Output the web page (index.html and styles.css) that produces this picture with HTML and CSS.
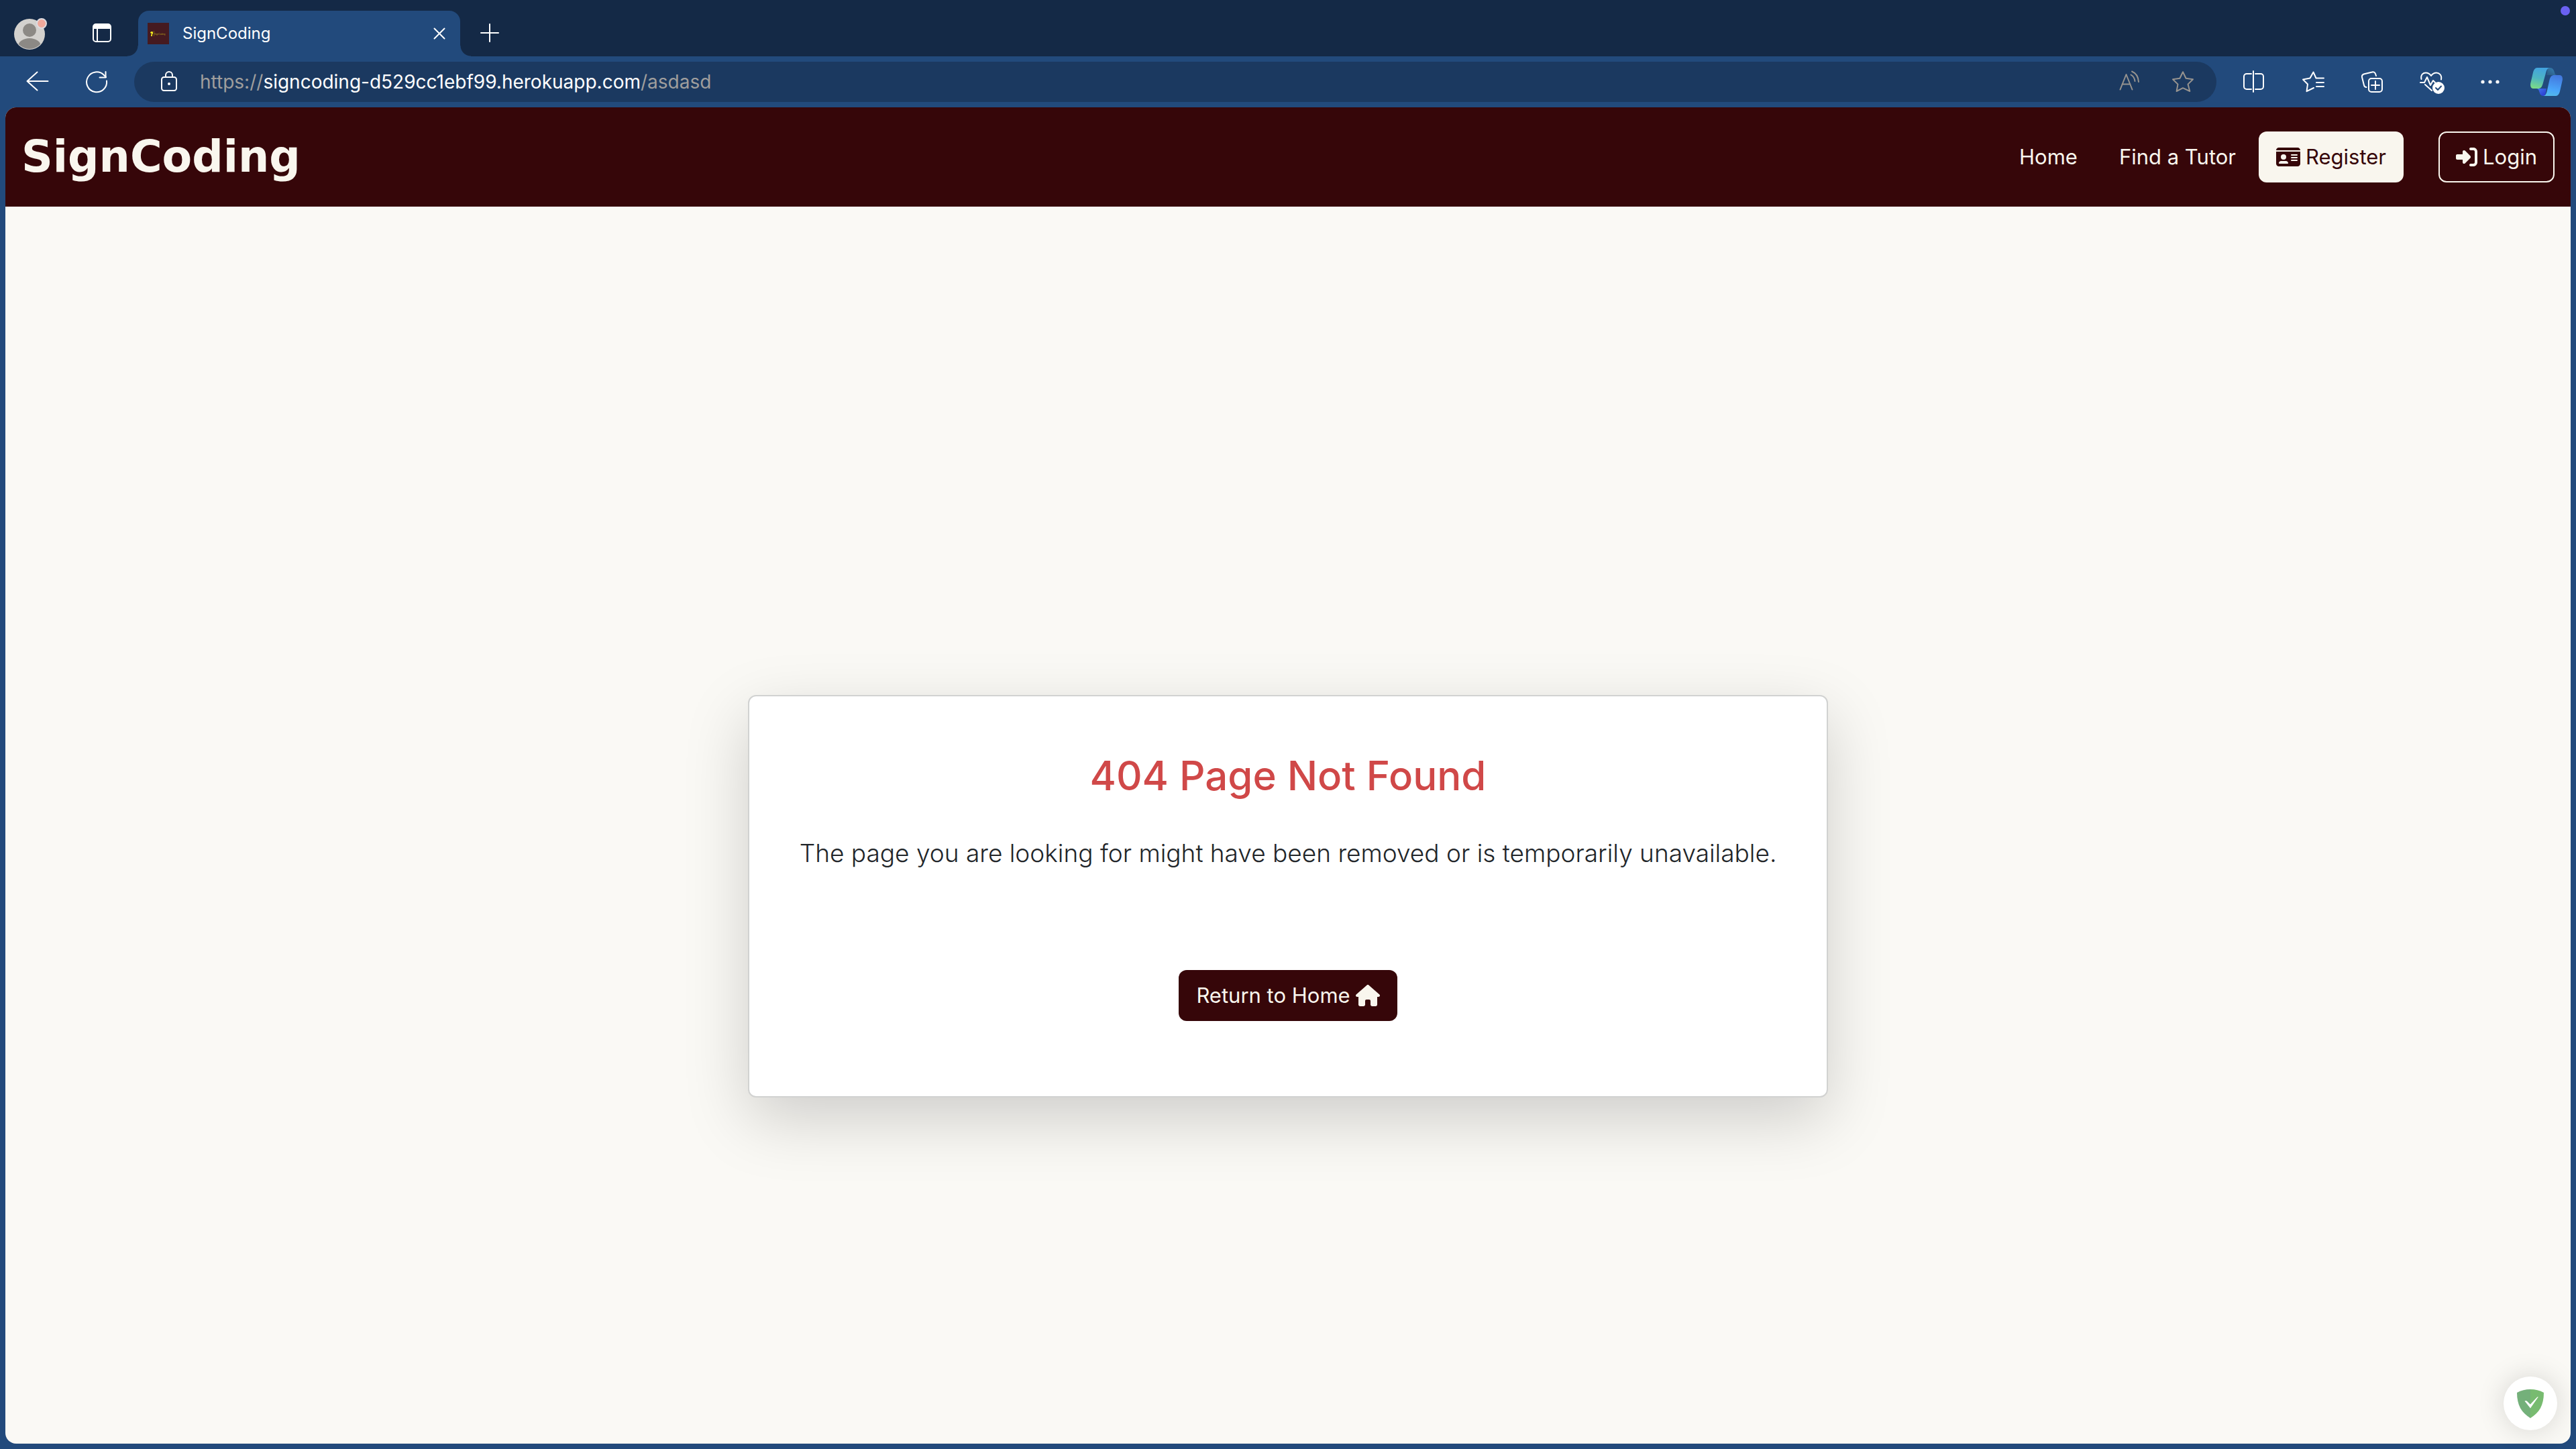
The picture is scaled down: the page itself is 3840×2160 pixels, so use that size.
FILE: index.html
```html
<!DOCTYPE html>
<html lang="en">
<head>
<meta charset="utf-8">
<meta name="viewport" content="width=device-width, initial-scale=1">
<title>SignCoding</title>
<link rel="stylesheet" href="styles.css">
</head>
<body>
<div class="browser">
  <div class="tabstrip">
    <button class="chrome-btn" type="button" aria-label="Profile">
      <svg width="52" height="52" viewBox="-2 0 52 52">
        <defs><clipPath id="face"><circle cx="24" cy="28" r="22"/></clipPath></defs>
        <circle cx="24" cy="28" r="23" fill="#d3d1ce"/>
        <g clip-path="url(#face)" fill="#8c8985"><circle cx="24" cy="22" r="10"/><ellipse cx="24" cy="46" rx="17" ry="12"/></g>
        <circle cx="42" cy="12" r="7" fill="#f0a99c" stroke="#dddbe0" stroke-width="2"/>
      </svg>
    </button>
    <button class="chrome-btn workspaces" type="button" aria-label="Tab actions">
      <svg width="32" height="32" viewBox="0 0 32 32" fill="none" stroke="#fff" stroke-width="2">
        <rect x="3" y="3" width="26" height="26" rx="4"/><path d="M9 9v20"/><path d="M3 9.500V7a4 4 0 0 1 4-4h18a4 4 0 0 1 4 4v2.500z" fill="#fff" stroke="none"/><path d="M3 9h26"/>
      </svg>
    </button>
    <div class="tab">
      <svg class="favicon" width="32" height="32" viewBox="0 0 32 32">
        <rect width="32" height="32" fill="#451a20"/>
        <path d="M4 14.500c1-2 3.500-2 4-.5.3 1.500-.3 3-1.200 3.500L7 20H5.200l-.2-2.500c1-.5 1.200-1 1-1.600-.8.300-1.700-.3-2-1.400z" fill="#f5ec1d"/>
        <path d="M9.500 12v8" stroke="#8d7a1c" stroke-width=".6"/>
        <text x="10" y="18" font-size="3" fill="#b6a41c">SignCoding</text>
      </svg>
      <span class="tab-title">SignCoding</span>
      <button class="tab-close" type="button" aria-label="Close tab">
        <svg width="18" height="18" viewBox="0 0 18 18" stroke="#fff" stroke-width="2" stroke-linecap="round"><path d="M1.500 1.500l15 15M16.500 1.500l-15 15"/></svg>
      </button>
    </div>
    <button class="chrome-btn" type="button" aria-label="New tab">
      <svg width="30" height="30" viewBox="0 0 30 30" stroke="#fff" stroke-width="2" stroke-linecap="round"><path d="M15 2v26M2 15h26"/></svg>
    </button>
    <span class="status-dot"></span>
  </div>

  <div class="toolbar">
    <div class="tools">
      <button class="chrome-btn" type="button" aria-label="Back">
        <svg width="40" height="40" viewBox="0 0 40 40" class="line"><path d="M35.500 19H4.500M19.500 5.500L4.500 19l15 13.500"/></svg>
      </button>
      <button class="chrome-btn" type="button" aria-label="Refresh">
        <svg width="40" height="40" viewBox="0 0 40 40" class="line"><path d="M35 18.500A15 15 0 1 1 31 10l3 3"/><path d="M33.500 5v8.500h-9"/></svg>
      </button>
    </div>
    <div class="address">
      <svg width="40" height="40" viewBox="0 0 40 40" class="line"><rect x="9" y="13" width="22" height="20" rx="3.500"/><path d="M15 13v-3a5 5 0 0 1 10 0v3"/><circle cx="20" cy="23" r="2" fill="#fff" stroke="none"/></svg>
      <div class="url" role="textbox" aria-label="Address"><span class="dim">https://</span>signcoding-d529cc1ebf99.herokuapp.com<span class="dim">/asdasd</span></div>
      <button class="address-btn" type="button" aria-label="Read aloud">
        <svg width="40" height="40" viewBox="0 0 40 40" class="line grey"><path d="M6.500 31.500L15.500 9l9 22.500M9.500 23.500h12"/><path d="M22.500 9.500c3.500 2 5.500 5 6 9.500M24 4.500c6 2.500 9.500 8 10 15.500"/></svg>
      </button>
      <button class="address-btn" type="button" aria-label="Add to favourites">
        <svg width="40" height="40" viewBox="0 0 40 40" class="line grey"><path d="M20 5.200L24.600 14.700 35 16.200 27.500 23.600 30.300 34 20 29.200 10.600 34 12.500 23.600 5 16.200 15.400 14.700z"/></svg>
      </button>
    </div>
    <div class="tools">
      <button class="chrome-btn" type="button" aria-label="Split screen">
        <svg width="40" height="40" viewBox="0 0 40 40" class="line"><path d="M16 8H9a4 4 0 0 0-4 4v15a4 4 0 0 0 4 4h7M22 8h8a4 4 0 0 1 4 4v15a4 4 0 0 1-4 4h-8M19 4v31"/></svg>
      </button>
      <button class="chrome-btn" type="button" aria-label="Favourites">
        <svg width="40" height="40" viewBox="0 0 40 40" class="line"><path d="M36 14.500H24.500L20.500 5.500 15.500 14.500 5 16.500 12 23.500 10.500 34.200 21 29M25 21h11M25 27h11"/></svg>
      </button>
      <button class="chrome-btn" type="button" aria-label="Collections">
        <svg width="40" height="40" viewBox="0 0 40 40" class="line"><rect x="15" y="15" width="20" height="20" rx="4"/><path d="M25 19v12M19 25h12M26 11l-1-3a4 4 0 0 0-5-2.500L7.500 8.500A4 4 0 0 0 5 13l3 12c.5 2 1.500 3 3.500 3"/></svg>
      </button>
      <button class="chrome-btn" type="button" aria-label="Browser essentials">
        <svg width="40" height="40" viewBox="0 0 40 40" class="line"><path d="M5.500 16C4 9 8.500 6.500 12 6.500c4 0 6 1.500 8 4.500 2-3 4-4.500 8-4.500 3.500 0 8.500 3 7 10M4 21h6l4-8 5 12 4-7 3 3M11 24l10 9"/><circle cx="31" cy="29" r="9" fill="#fff" stroke="none"/><path d="M27 29l3 3 5-5.500" stroke="#224a7c"/></svg>
      </button>
      <button class="chrome-btn" type="button" aria-label="Settings and more">
        <svg width="40" height="40" viewBox="0 0 40 40" fill="#fff"><circle cx="9" cy="20" r="2.600"/><circle cx="20" cy="20" r="2.600"/><circle cx="31" cy="20" r="2.600"/></svg>
      </button>
      <button class="chrome-btn copilot" type="button" aria-label="Copilot">
        <svg width="48" height="42" viewBox="0 0 48 42">
          <defs>
            <linearGradient id="cl" x1=".5" y1="0" x2=".3" y2="1"><stop offset="0" stop-color="#43a3df"/><stop offset=".5" stop-color="#4db5c2"/><stop offset="1" stop-color="#7cdb86"/></linearGradient>
            <linearGradient id="cr" x1=".6" y1="0" x2=".4" y2="1"><stop offset="0" stop-color="#4378de"/><stop offset=".7" stop-color="#4aa6fa"/><stop offset="1" stop-color="#53b9ea"/></linearGradient>
            <linearGradient id="ct" x1="1" y1="0" x2="0" y2="1"><stop offset="0" stop-color="#3a86ba"/><stop offset="1" stop-color="#29577f"/></linearGradient>
            <linearGradient id="cb" x1="0" y1="0" x2="1" y2="1"><stop offset="0" stop-color="#4478f0"/><stop offset="1" stop-color="#2634cc"/></linearGradient>
          </defs>
          <path d="M26 0h3c5 0 6 4 7 7 .8 3 1.500 4 4 4H24z" fill="url(#ct)"/>
          <path d="M22 42h-3c-4 0-5-4-6-7-.8-3-2-4-4-4h15z" fill="url(#cb)"/>
          <path d="M10 0h19c-3 0-4.500 3-5.500 6l-5 18c-1.300 4.500-3 7-7 7H5c-4 0-5.500-3-4.700-8L4 7c1-4 3-7 6-7z" fill="url(#cl)"/>
          <path d="M38 42H19c3 0 4.500-3 5.500-6l4-18c1.300-4.500 3-7 7-7H43c4 0 5.500 3 4.700 8L44 35c-1 4-3 7-6 7z" fill="url(#cr)"/>
        </svg>
      </button>
    </div>
  </div>

  <div class="page">
    <header class="navbar">
      <a class="brand" href="#">SignCoding</a>
      <nav class="nav">
        <a class="nav-link" href="#">Home</a>
        <a class="nav-link" href="#">Find a Tutor</a>
        <a class="btn btn-light" href="#">
          <svg width="36" height="32" viewBox="0 0 576 512" fill="currentColor"><path fill-rule="evenodd" d="M0 96l576 0c0-35.300-28.700-64-64-64L64 32C28.700 32 0 60.700 0 96zM0 128L0 416c0 35.300 28.700 64 64 64l448 0c35.300 0 64-28.700 64-64l0-288L0 128zM64 405.300c0-29.500 23.900-53.300 53.300-53.300l117.300 0c29.500 0 53.300 23.900 53.300 53.300c0 5.900-4.800 10.700-10.700 10.700L74.700 416c-5.900 0-10.700-4.800-10.700-10.700zM176 192a64 64 0 1 1 0 128 64 64 0 1 1 0-128zM368 192h128a16 16 0 0 1 0 32H368a16 16 0 0 1 0-32zM368 256h128a16 16 0 0 1 0 32H368a16 16 0 0 1 0-32zM368 320h128a16 16 0 0 1 0 32H368a16 16 0 0 1 0-32z"/></svg>
          <span>Register</span>
        </a>
        <a class="btn btn-outline" href="#">
          <svg width="32" height="32" viewBox="0 0 512 512" fill="currentColor"><path d="M217.900 105.900L340.700 228.700c7.200 7.200 11.300 17.100 11.300 27.300s-4.100 20.100-11.300 27.300L217.900 406.100c-6.400 6.400-15 9.900-24 9.900c-18.700 0-33.900-15.200-33.900-33.900l0-62.100L32 320c-17.700 0-32-14.300-32-32l0-64c0-17.700 14.300-32 32-32l128 0 0-62.100c0-18.700 15.200-33.900 33.900-33.900c9 0 17.600 3.600 24 9.900zM352 416l64 0c17.700 0 32-14.300 32-32l0-256c0-17.700-14.300-32-32-32l-64 0c-17.700 0-32-14.300-32-32s14.300-32 32-32l64 0c53 0 96 43 96 96l0 256c0 53-43 96-96 96l-64 0c-17.700 0-32-14.300-32-32s14.300-32 32-32z"/></svg>
          <span>Login</span>
        </a>
      </nav>
    </header>

    <main class="content">
      <section class="card">
        <h1 class="card-title">404 Page Not Found</h1>
        <p class="card-text">The page you are looking for might have been removed or is temporarily unavailable.</p>
        <a class="btn btn-dark" href="#">
          <span>Return to Home</span>
          <svg width="36" height="32" viewBox="0 0 576 512" fill="currentColor"><path d="M575.800 255.500c0 18-15 32.100-32 32.100l-32 0 .7 160.200c0 2.700-.2 5.400-.5 8.100l0 16.200c0 22.100-17.900 40-40 40l-16 0c-1.100 0-2.200 0-3.300-.1c-1.400 .1-2.800 .1-4.200 .1L416 512l-24 0c-22.100 0-40-17.900-40-40l0-24 0-64c0-17.700-14.300-32-32-32l-64 0c-17.700 0-32 14.300-32 32l0 64 0 24c0 22.100-17.900 40-40 40l-24 0-31.900 0c-1.500 0-3-.1-4.500-.2c-1.200 .1-2.400 .2-3.600 .2l-16 0c-22.100 0-40-17.900-40-40l0-112c0-.9 0-1.900 .1-2.800l0-69.700-32 0c-18 0-32-14-32-32.100c0-9 3-17 10-24L266.400 8c7-7 15-8 22-8s15 2 21 7L564.800 231.500c8 7 12 15 11 24z"/></svg>
        </a>
      </section>
    </main>

    <button class="shield" type="button" aria-label="Protection status">
      <svg width="40" height="43" viewBox="0 0 40 43"><path d="M20 0v43C7 35 0 24 0 5 6 1.500 13 0 20 0z" fill="#74b07a"/><path d="M20 0v43c13-8 20-19 20-38C34 1.500 27 0 20 0z" fill="#78bb70"/><path d="M11.500 17.500c1.200-1 2.800-.5 3.800.6l4.500 4.500 9.500-10.200c.9-.9 1.600-1.200 2.400-1L20 28.300z" fill="#fff"/></svg>
    </button>
  </div>
</div>
</body>
</html>
```
FILE: styles.css
```css
* {
  box-sizing: border-box;
}

body {
  margin: 0;
  font-family: Inter, "Liberation Sans", sans-serif;
  font-size: 31px;
  line-height: 48px;
  color: #212529;
  background: #224a7c;
}

a {
  text-decoration: none;
}

button {
  padding: 0;
  border: 0;
  background: none;
  font: inherit;
  color: inherit;
}

svg {
  display: block;
  flex: none;
}

.browser {
  display: flex;
  flex-direction: column;
  min-height: 100vh;
}

/* Tab strip */
.tabstrip {
  position: relative;
  display: flex;
  align-items: flex-end;
  height: 84px;
  background: #142946;
}

.chrome-btn {
  display: flex;
  align-items: center;
  justify-content: center;
  flex: none;
  width: 88px;
  height: 68px;
}

.workspaces {
  margin: 0 10px 0 20px;
}

.tabstrip .chrome-btn {
  padding-bottom: 2px;
}

.tab {
  position: relative;
  display: flex;
  align-items: center;
  width: 480px;
  height: 68px;
  padding: 0 22px 0 14px;
  border-radius: 16px 16px 0 0;
  background: #224a7c;
  color: #fff;
}

.tab::before,
.tab::after {
  content: "";
  position: absolute;
  bottom: 0;
  width: 16px;
  height: 16px;
}

.tab::before {
  right: 100%;
  background: radial-gradient(circle at 0 0, transparent 15px, #224a7c 16px);
}

.tab::after {
  left: 100%;
  background: radial-gradient(circle at 100% 0, transparent 15px, #224a7c 16px);
}

.tab-title {
  flex: 1;
  margin-left: 20px;
  font-size: 24px;
  line-height: 32px;
}

.status-dot {
  position: absolute;
  top: 9px;
  right: 9px;
  width: 14px;
  height: 14px;
  border-radius: 50%;
  background: #6a61f2;
}

/* Toolbar */
.toolbar {
  display: flex;
  align-items: center;
  gap: 12px;
  height: 76px;
  padding: 0 4px 0 12px;
}

.line {
  fill: none;
  stroke: #fff;
  stroke-width: 2;
  stroke-linecap: round;
  stroke-linejoin: round;
}

.grey {
  stroke: #96938f;
}

.address {
  display: flex;
  align-items: center;
  flex: 1;
  height: 60px;
  padding: 0 10px 0 32px;
  border-radius: 30px;
  background: #1b3960;
  color: #fff;
}

.url {
  flex: 1;
  margin-left: 26px;
  font-size: 28px;
  line-height: 40px;
}

.dim {
  color: #9f9e9d;
}

.address-btn {
  display: flex;
  justify-content: center;
  width: 80px;
}

.tools {
  display: flex;
  align-items: center;
}

.copilot {
  width: 80px;
}

/* Page */
.page {
  display: flex;
  flex-direction: column;
  flex: 1;
  margin: 0 8px 8px;
  border-radius: 16px;
  overflow: hidden;
  background: #faf9f5;
}

.navbar {
  display: flex;
  align-items: center;
  justify-content: space-between;
  padding: 36px 24px;
  background: #360609;
}

.brand {
  font-family: "DejaVu Sans", sans-serif;
  font-size: 65px;
  font-weight: 700;
  line-height: 76px;
  color: #f9f6ee;
}

.nav {
  display: flex;
  align-items: center;
}

.nav-link {
  margin-right: 34px;
  color: #f9f6ee;
}

.nav-link:first-child {
  margin-right: 62px;
}

.btn {
  display: flex;
  align-items: center;
  gap: 8px;
  padding: 12px 24px;
  border: 2px solid transparent;
  border-radius: 12px;
}

.btn-light {
  margin-right: 52px;
  background: #f9f6ee;
  color: #360609;
}

.btn-outline {
  border-color: #f9f6ee;
  color: #f9f6ee;
}

.btn-dark {
  background: #360609;
  color: #f9f6ee;
}

.content {
  display: flex;
  align-items: center;
  justify-content: center;
  flex: 1;
  padding: 212px 24px 0;
}

.card {
  display: flex;
  flex-direction: column;
  align-items: center;
  width: 1610px;
  max-width: 100%;
  padding: 80px 40px 112px;
  border: 2px solid #d1d2d1;
  border-radius: 12px;
  background: #fff;
  box-shadow: 0 32px 96px rgba(0, 0, 0, 0.175);
  text-align: center;
}

.card-title {
  margin: 0 0 48px;
  font-size: 60px;
  font-weight: 500;
  line-height: 76px;
  color: #d04848;
}

.card-text {
  margin: 0 0 144px;
  font-size: 37px;
  font-weight: 300;
  line-height: 60px;
}

/* Floating badge over the page corner */
.shield {
  position: fixed;
  right: 28px;
  bottom: 28px;
  display: flex;
  align-items: center;
  justify-content: center;
  width: 80px;
  height: 80px;
  border-radius: 50%;
  background: #fff;
  box-shadow: 0 0 40px rgba(0, 0, 0, 0.15);
}
```
